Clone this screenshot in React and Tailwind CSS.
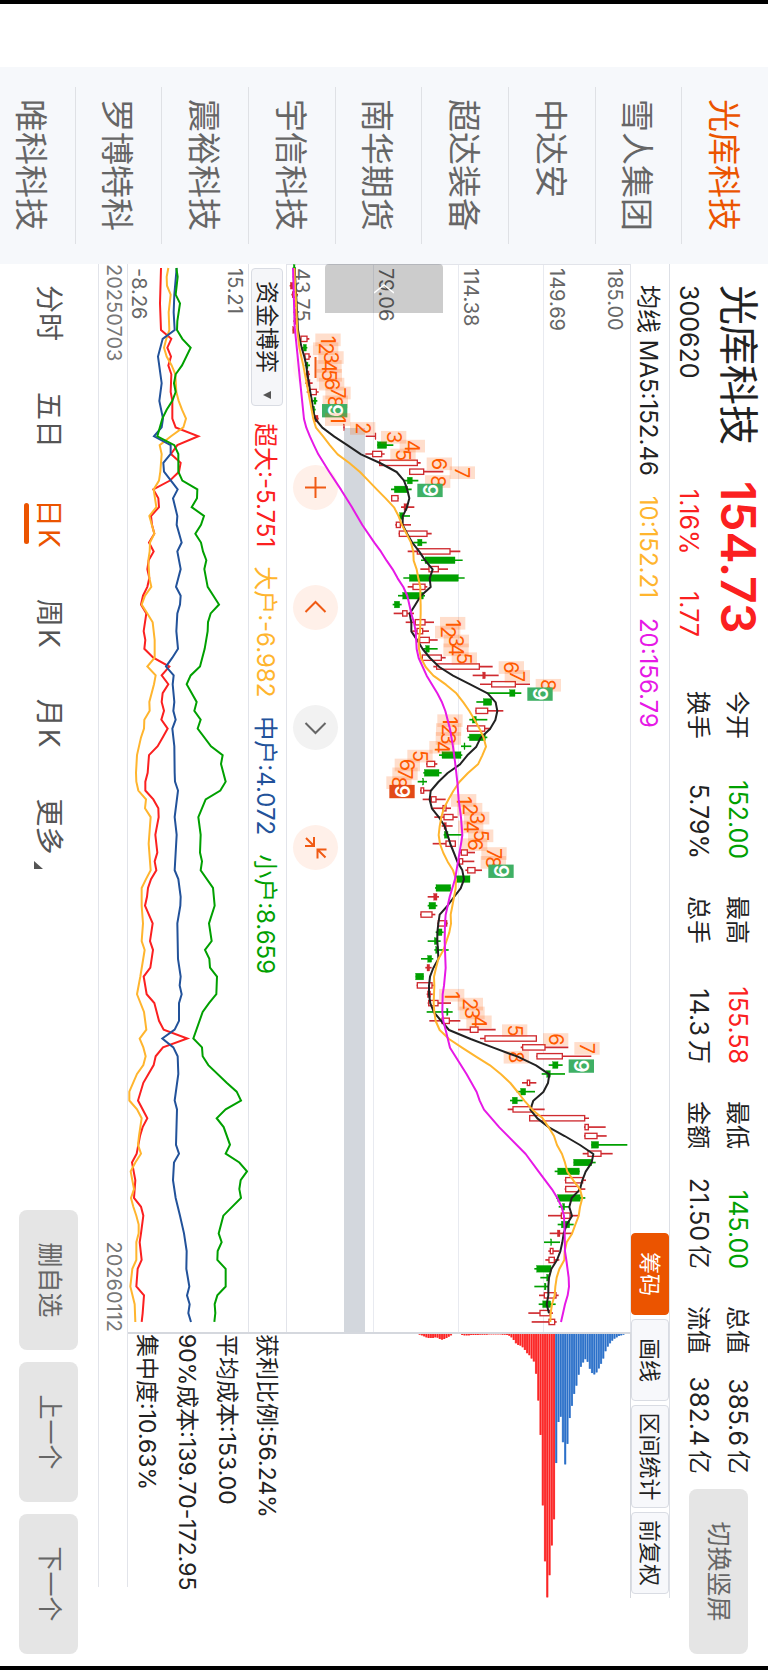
import React from "react";

const WATCHLIST = ["光库科技", "雪人集团", "中达安", "超达装备", "南华期货", "宇信科技", "震裕科技", "罗博特科", "唯科科技"];

const QUOTES = [
  [{ label: "今开", value: "152.00", tone: "text-[#00a000]" }, { label: "换手", value: "5.79%" }],
  [{ label: "最高", value: "155.58", tone: "text-[#fb2020]" }, { label: "总手", value: "14.3", unit: "万" }],
  [{ label: "最低", value: "145.00", tone: "text-[#00a000]" }, { label: "金额", value: "21.50", unit: "亿" }],
  [{ label: "总值", value: "385.6", unit: "亿" }, { label: "流值", value: "382.4", unit: "亿" }],
];

/* Chart units are a third of a pixel; one trading day spans STEP units. */
const FIRST = 12;
const STEP = 26.57;
const dayX = (i) => FIRST + STEP * i;

/* Candles: kind (h hollow rise, s solid rise, g fall), body low, body high, wick low, wick high. */
const CANDLES = [
  {
    base: -21,
    from: 0,
    rows: [
      ["g", 40, 45, 38, 48], ["s", 39, 47, 38, 48], ["s", 31, 39, 29, 42], ["h", 37, 50, 34, 54], ["s", 42, 48, 40, 50],
      ["s", 42, 48, 40, 50], ["s", 42, 49, 40, 50], ["s", 38, 44, 38, 46], ["h", 62, 82, 60, 88], ["g", 70, 79, 66, 82],
      ["h", 74, 88, 72, 93], ["g", 78, 84, 74, 90], ["s", 79, 87, 76, 90], ["s", 80, 90, 76, 98], ["h", 90, 110, 80, 116],
      ["g", 102, 108, 98, 112], ["g", 99, 104, 97, 107], ["s", 104, 114, 100, 116], ["s", 191, 193, 190, 194], ["s", 285, 288, 257, 288],
      ["g", 292, 320, 292, 340], ["h", 277, 306, 256, 314], ["h", 298, 413, 297, 422], ["h", 388, 432, 387, 490], ["g", 382, 397, 370, 415],
      ["g", 343, 383, 333, 395], ["h", 334, 355, 333, 356], ["s", 372, 381, 363, 403], ["g", 359, 370, 357, 390], ["h", 348, 362, 346, 393],
    ],
  },
  {
    base: 279,
    from: 30,
    rows: [
      ["h", 57, 142, 56, 155], ["g", 113, 126, 100, 140], ["h", 111, 211, 83, 241], ["g", 135, 225, 123, 248], ["h", 146, 176, 121, 204],
      ["g", 88, 235, 70, 254], ["h", 98, 136, 83, 142], ["g", 68, 130, 54, 135], ["g", 43, 59, 38, 65], ["h", 67, 82, 41, 102],
      ["h", 105, 136, 77, 162], ["h", 110, 129, 97, 147], ["h", 118, 149, 116, 173], ["g", 137, 148, 130, 173], ["h", 126, 185, 122, 197],
      ["h", 169, 299, 160, 338], ["s", 308, 316, 278, 356], ["h", 334, 407, 300, 450], ["g", 389, 405, 320, 424], ["g", 310, 335, 289, 335],
      ["h", 287, 324, 286, 370], ["g", 277, 289, 268, 322], ["h", 262, 315, 260, 333], ["g", 268, 316, 263, 322], ["g", 252, 255, 243, 274],
      ["g", 186, 243, 177, 247], ["h", 140, 165, 138, 172], ["g", 133, 177, 130, 185], ["g", 128, 131, 113, 141], ["h", 122, 132, 120, 152],
      ["h", 153, 169, 128, 197], ["h", 188, 199, 158, 213], ["h", 191, 220, 163, 233], ["s", 192, 199, 185, 218], ["g", 193, 204, 191, 247],
      ["h", 197, 227, 158, 228], ["h", 243, 263, 240, 285], ["h", 237, 249, 234, 283], ["h", 262, 286, 256, 306], ["g", 228, 270, 228, 270],
      ["g", 168, 212, 165, 213], ["s", 161, 171, 143, 177], ["g", 147, 167, 143, 172], ["h", 122, 157, 120, 166], ["h", 174, 201, 172, 203],
      ["g", 173, 186, 167, 191], ["g", 163, 173, 143, 182], ["g", 167, 175, 163, 206], ["g", 143, 155, 123, 160], ["s", 141, 149, 136, 155],
      ["g", 107, 131, 107, 131], ["h", 111, 157, 110, 164], ["s", 142, 152, 140, 158], ["h", 145, 175, 143, 213], ["g", 200, 204, 140, 218],
      ["h", 185, 209, 148, 241], ["h", 270, 295, 234, 347],
    ],
  },
  {
    base: 339,
    from: 87,
    rows: [
      ["h", 254, 410, 240, 411], ["h", 367, 436, 362, 505], ["h", 410, 488, 409, 574], ["g", 458, 474, 446, 488], ["g", 440, 451, 425, 495],
      ["h", 381, 390, 366, 409], ["g", 362, 377, 350, 405], ["g", 337, 352, 330, 368], ["h", 338, 396, 323, 434], ["h", 388, 555, 387, 567],
      ["h", 554, 566, 552, 617], ["h", 554, 592, 552, 620], ["g", 574, 596, 574, 682], ["h", 563, 604, 548, 638], ["g", 521, 575, 521, 587],
      ["g", 473, 538, 464, 539], ["h", 496, 549, 494, 558], ["h", 496, 537, 494, 556], ["g", 473, 541, 468, 556], ["g", 488, 494, 476, 508],
      ["h", 483, 511, 444, 535], ["g", 484, 509, 473, 521], ["s", 472, 480, 449, 518], ["g", 452, 455, 432, 480], ["h", 450, 460, 445, 478],
      ["h", 446, 464, 436, 478], ["g", 410, 453, 403, 455], ["g", 440, 446, 421, 448], ["g", 433, 438, 403, 446], ["h", 432, 469, 417, 476],
      ["g", 428, 452, 416, 467], ["h", 419, 451, 385, 459], ["h", 446, 465, 395, 470],
    ],
  },
];

/* Moving averages: each segment shifts its [x, level] pairs by dx and dy. */
const AVERAGES = [
  {
    color: "#222222",
    parts: [
      [-42, -21, "54,44 240,54 267,59 293,65 320,73 347,79 373,82 400,87 427,91 453,96 480,99 507,106 533,127 560,163 586,203 613,243 639,300 666,350 692,372 719,382 745,388 772,381 799,368 825,368 852,382"],
      [708, 279, "128,97 155,118 182,136 208,158 235,149 261,152 288,122 314,106 341,89 368,94 394,94 421,112 447,128 474,150 501,178 527,219 554,272 580,323 607,347 633,352 660,346 687,330 713,302 740,289 766,262 793,240 819,203 846,175 873,152"],
      [1488, 279, "119,149 146,156 172,177 199,194 225,203 252,211 279,222 305,232 331,247 358,252 385,242 411,222 438,202 464,179 491,175 517,172 544,172 571,174 597,175 624,160 650,150 677,147 703,147 730,151 757,162 783,184 810,207"],
      [2148, 339, "177,212 203,280 230,353 256,408 283,448 309,444 336,430 362,400 389,391 415,412 442,447 468,494 495,540 522,580 548,575 575,557 601,547 628,540 654,515 681,508 708,516 734,500 761,491 787,487 814,481 840,471 867,454 893,447 920,445 946,445 973,440 1000,447"],
    ],
  },
  {
    color: "#ffb52e",
    parts: [
      [-42, -21, "54,43 240,52 293,58 347,70 400,80 453,90 507,100 533,108 560,130 586,150 613,173 639,208 666,240 692,265 719,291 745,317 772,342 799,356 825,366 852,380 878,393"],
      [708, 279, "155,100 182,101 208,110 235,115 261,121 288,121 314,122 341,122 368,121 394,120 421,116 447,117 474,123 501,137 527,160 554,198 580,229 607,250 633,268 660,284 687,299 713,311 740,318 766,307 793,294 819,264 846,238 873,220 899,205"],
      [1488, 279, "146,191 172,184 199,179 225,176 252,180 279,190 305,203 331,219 358,228 385,227 411,222 438,217 464,212 491,213 517,208 544,199 571,190 597,175 624,168 650,162 677,163 703,162 730,161 757,163 783,167 810,179"],
      [2148, 339, "177,147 203,186 230,228 256,270 283,303 309,331 336,353 362,373 389,397 415,428 442,446 468,462 495,471 522,486 548,495 575,502 601,520 628,540 654,547 681,540 708,536 734,526 761,516 787,500 814,494 840,493 867,478 893,470 920,466 946,464 973,456 1000,452 1026,451"],
    ],
  },
  {
    color: "#e619e6",
    parts: [
      [-42, -21, "54,39 230,44 320,53 400,61 507,72 533,79 560,90 586,102 613,115 666,148 719,183 772,216 825,247 878,283"],
      [708, 279, "155,3 182,20 208,38 235,53 261,70 288,82 314,88 341,94 368,102 394,107 447,110 474,116 527,140 580,172 607,186 633,196 687,210 740,219 793,226 846,232 899,236"],
      [1488, 279, "172,243 225,247 252,243 305,234 358,225 411,209 464,197 491,195 544,194 624,197 677,192 703,188 757,187 783,190 810,197"],
      [2148, 339, "203,150 283,200 336,230 362,239 389,252 442,298 522,377 575,416 628,456 654,472 681,485 708,492 761,494 814,495 840,499 893,506 920,507 946,503 973,495 1000,489 1026,483"],
    ],
  },
];

/* Nine-count sequences: first day, level of every digit, colour of the closing nine. */
const COUNTS = [
  { from: 8, base: -21, levels: [144, 137, 153, 147, 148, 155, 174, 166, 164], end: "#3fb065" },
  { from: 17, base: -21, levels: [173, 248, 341, 397, 369, 478, 547, 473, 450], end: "#3fb065" },
  { from: 40, base: 279, levels: [218, 203, 229, 228, 253, 394, 412, 505, 480], end: "#3fb065" },
  { from: 51, base: 279, levels: [210, 206, 205, 186, 120, 82, 75, 57, 66], end: "#e34a17" },
  { from: 60, base: 279, levels: [251, 269, 290, 272, 302, 284, 342, 340, 363], end: "#3fb065" },
  { from: 82, base: 339, levels: [155, 211, 216, 237, 344, 467, 561, 349, 544], end: "#3fb065" },
];

const FLOWS = [
  {
    color: "#fb2020",
    points: "0,213 4,210 7,213 8,244 9,232 10,243 11,235 12,244 14,242 15,247 17,247 18,257 19,325 20,262 21,243 22,272 23,267 24,240 25,190 26,205 27,207 28,183 29,186 30,193 31,177 32,191 33,176 34,172 35,178 36,172 37,159 38,153 39,169 41,161 42,166 43,163 44,190 45,238 46,215 47,235 48,218 49,215 50,222 51,214 52,233 53,218 54,203 55,177 57,173 58,166 59,166 60,190 61,205 62,206 64,196 66,202 67,194 68,199 69,183 70,174 71,171 72,165 74,188 76,180 77,189 79,181 80,161 82,170 83,193 85,207 86,221 87,292 88,219 89,197 90,191 92,160 94,144 96,172 97,158 98,150 100,140 101,126 103,136 105,132 106,153 107,160 109,153 110,149 112,155 113,143 115,139 116,162 118,158 119,155",
  },
  {
    color: "#ffb52e",
    points: "0,235 1,230 2,231 3,242 5,236 7,238 8,229 9,222 10,230 11,245 12,256 14,259 15,266 16,276 17,288 18,280 19,243 20,209 21,215 23,211 24,207 25,191 26,195 27,199 28,178 30,193 31,180 32,179 33,175 35,178 36,184 37,165 38,155 39,172 40,188 42,194 44,194 45,172 46,197 47,192 49,178 50,179 51,163 52,162 53,153 55,141 57,138 58,139 59,145 60,168 61,165 62,182 65,176 68,182 69,168 70,155 72,155 74,159 76,155 77,164 80,151 82,141 84,162 86,169 87,149 88,160 89,167 90,160 91,141 93,118 94,118 95,141 96,155 98,147 99,144 100,153 101,136 102,122 104,132 105,123 106,130 107,139 108,146 109,146 110,139 112,139 113,127 115,121 117,134 119,136",
  },
  {
    color: "#22529a",
    points: "0,260 3,253 5,251 7,254 8,218 10,204 13,215 15,208 17,219 18,215 19,192 20,242 21,242 22,220 23,222 25,263 26,249 28,262 29,260 31,275 32,262 34,272 36,258 37,272 38,270 39,262 41,259 43,264 44,247 45,228 46,251 47,248 49,253 50,250 51,257 52,247 54,253 57,254 58,255 59,264 62,254 64,260 68,254 69,265 71,272 72,271 74,262 78,264 80,272 81,269 82,275 83,267 85,267 86,254 87,217 88,250 89,263 91,265 94,254 95,261 99,258 100,267 101,252 103,249 105,257 107,270 109,282 111,290 113,289 115,298 116,291 117,299 118,295 119,303",
  },
  {
    color: "#00a000",
    points: "0,259 1,263 3,257 4,270 6,262 7,261 8,277 9,302 11,276 12,257 13,252 14,257 15,247 16,230 17,217 19,202 20,253 21,265 23,265 24,277 25,322 26,321 27,305 28,342 29,333 30,316 31,333 32,339 33,349 34,343 36,353 38,387 39,362 40,354 41,353 43,344 45,330 46,302 47,290 49,320 50,313 51,332 52,323 54,363 55,398 56,393 58,407 59,391 60,347 62,325 64,332 66,330 67,336 68,332 70,369 72,374 74,357 76,365 77,345 78,358 79,360 80,381 82,379 83,357 84,338 87,310 88,336 89,338 90,355 92,410 93,440 94,453 95,407 96,380 97,401 99,420 100,407 101,448 102,471 103,452 104,448 105,453 107,400 109,386 110,395 111,383 112,382 113,407 115,407 116,382 117,374 118,376 119,373",
  },
];

/* Chip distribution, one bar every 6.77 units going up from level 396. */
const CHIPS_LOSS = [
  2, 4, 7, 10, 12, 12, 12, 10, 11, 15, 17, 15, 12, 8, 4, 0, 0, 0, 0, 3, 4, 4, 4, 3, 3, 3, 3, 2, 2, 2, 2, 1, 1, 1, 1, 1, 1, 2, 2,
  3, 5, 10, 18, 28, 33, 35, 40, 48, 58, 64, 74, 83, 120, 201, 305, 518, 687, 796, 729, 639, 560,
];
const CHIPS_GAIN = [
  390, 266, 250, 327, 394, 332, 254, 217, 181, 156, 123, 99, 86, 76, 84, 105, 118, 122, 116, 104, 90, 74, 52, 38, 28, 20, 14, 10, 6, 4, 2,
];

const parse = (text) => text.split(" ").map((pair) => pair.split(",").map(Number));

function PriceChart() {
  const H = 1032;
  const labels = [
    ["185.00", 963],
    ["149.69", 788],
    ["114.38", 532],
    ["79.06", 276],
    ["43.75", 24],
  ];
  return (
    <svg viewBox="0 0 3204 1032" className="pointer-events-none relative block w-full" role="img" aria-label="日K线图">
      <g fontFamily="Inter, sans-serif" fontSize="60" fill="#666">
        {labels.map(([text, level]) => (
          <text key={text} x="12" y={H - level}>{text}</text>
        ))}
      </g>
      {CANDLES.map((group) =>
        group.rows.map(([kind, lo, hi, wickLo, wickHi], n) => {
          const i = group.from + n;
          const x = dayX(i);
          const y = (v) => H - group.base - v;
          const color = kind === "g" ? "#00a000" : "#cf2b30";
          return (
            <g key={i} stroke={color}>
              <line x1={x} x2={x} y1={y(wickHi)} y2={y(wickLo)} strokeWidth="5" />
              {kind === "h" ? (
                <rect x={x - 8} y={y(hi) + 1} width="16" height={Math.max(hi - lo - 2, 2)} fill="#fff" strokeWidth="4" />
              ) : (
                <rect x={x - 10} y={y(hi)} width="20" height={Math.max(hi - lo, 2)} fill={color} strokeWidth="1" />
              )}
            </g>
          );
        }),
      )}
      {COUNTS.map((run) =>
        run.levels.map((level, n) => {
          const x = dayX(run.from + n) + 3;
          const y = H - run.base - level;
          const last = n === 8;
          return (
            <g key={`${run.from}-${n}`}>
              <rect
                x={x - (last ? 20 : 19)}
                y={y - 38}
                width={last ? 40 : 38}
                height="76"
                fill={last ? run.end : "#ff5a00"}
                fillOpacity={last ? 1 : 0.2}
              />
              <text
                x={x}
                y={y + 21}
                textAnchor="middle"
                fontFamily="Inter, sans-serif"
                fontSize="60"
                fontWeight={last ? 600 : 400}
                fill={last ? "#fff" : "#ff5a00"}
              >
                {n + 1}
              </text>
            </g>
          );
        }),
      )}
      {AVERAGES.map(({ color, parts }) => (
        <polyline
          key={color}
          fill="none"
          stroke={color}
          strokeWidth="6"
          strokeLinejoin="round"
          points={parts.flatMap(([dx, dy, text]) => parse(text).map(([x, v]) => `${x + dx},${H - v - dy}`)).join(" ")}
        />
      ))}
    </svg>
  );
}

function FlowChart() {
  return (
    <svg viewBox="0 0 3204 360" className="block w-full" role="img" aria-label="资金博弈走势">
      <g fontFamily="Inter, sans-serif" fontSize="60" fill="#666">
        <text x="12" y="59">15.21</text>
        <text x="12" y="347">-8.26</text>
      </g>
      {FLOWS.map(({ color, points }) => (
        <polyline
          key={color}
          fill="none"
          stroke={color}
          strokeWidth="6"
          points={parse(points).map(([i, v]) => `${dayX(i)},${474 - v}`).join(" ")}
        />
      ))}
    </svg>
  );
}

function ChipChart() {
  const bar = (length, n, dark, light) => {
    const y = 1032 - 396 - 6.77 * n;
    return (
      <g key={n}>
        <rect x="0" y={y - 3.4} width={length} height="6.8" fill={light} />
        <rect x="0" y={y - 2.4} width={length} height="4.4" fill={dark} />
      </g>
    );
  };
  return (
    <svg viewBox="0 0 798 1032" className="block w-full" role="img" aria-label="筹码分布">
      {CHIPS_LOSS.map((length, n) => bar(length, n, "#fb2424", "#fc5c5c"))}
      {CHIPS_GAIN.map((length, n) => bar(length, n + CHIPS_LOSS.length, "#2b70c9", "#6698d8"))}
    </svg>
  );
}

const CONTROLS = [
  { label: "缩小", tone: "bg-[#fff8f5] text-[#f05a14]", path: "M12 22.500H33" },
  { label: "放大", tone: "bg-[#fff0e9] text-[#f05a14]", path: "M12 22.500H33M22.500 12V33" },
  { label: "左移", tone: "bg-[#fff0e9] text-[#f05a14]", path: "M27 12.500L17 22.500L27 32.500" },
  { label: "右移", tone: "bg-[#f2f2f2] text-[#666]", path: "M18 12.500L28 22.500L18 32.500" },
  {
    label: "收起",
    tone: "bg-[#fff0e9] text-[#f05a14]",
    path: "M24.500 11.500V20.500H33.500M24.500 20.500L32.500 12.500M12 24H21V33M21 24L13 32",
  },
];

function Tool({ children, active, wide }) {
  return (
    <button
      type="button"
      className={`h-[38px] rounded border text-[22px] leading-[22px] ${wide ? "w-[103px]" : "w-[82px]"} ${
        active ? "border-[#eb5400] bg-[#eb5400] text-white" : "border-[#d9dce3] bg-[#f7f8fb] text-[#222]"
      }`}
    >
      {children}
    </button>
  );
}

function GreyButton({ children, wide }) {
  return (
    <button
      type="button"
      className={`h-[59px] rounded-lg bg-[#e5e5e5] text-[25px] text-[#666] ${wide ? "w-[165px]" : "w-[140px]"}`}
    >
      {children}
    </button>
  );
}

export default function App() {
  return (
    <div className="h-screen overflow-hidden bg-white">
      <div className="flex h-[100vw] w-[100vh] origin-top-left translate-x-[100vw] rotate-90 border-x-4 border-black bg-white font-['Inter','Noto_Sans_CJK_SC',sans-serif] text-[#222]">
        <nav aria-label="自选股" className="ml-[63px] w-[197px] shrink-0 overflow-hidden bg-[#f6f8fb]">
          <ul className="mx-5 grid h-[780px] grid-rows-9">
            {WATCHLIST.map((name, i) => (
              <li key={name} className="border-b border-[#dfe1e5]">
                <a
                  href={`#${name}`}
                  className={`flex h-full items-center pt-1 pl-3 text-[33px] whitespace-nowrap ${i === 0 ? "text-[#eb5400]" : "text-[#666]"}`}
                >
                  {name}
                </a>
              </li>
            ))}
          </ul>
        </nav>

        <main className="flex min-w-0 flex-1 flex-col">
          <header className="flex h-[98px] shrink-0 pr-3 pl-[21px] whitespace-nowrap">
            <div className="w-[196px]">
              <h1 className="text-[40px] leading-[60px]">光库科技</h1>
              <p className="text-[25px] leading-[38px]">300620</p>
            </div>
            <div className="w-[156px] text-[#fb2020]">
              <p className="text-[48px] leading-[60px] font-semibold">154.73</p>
              <p className="flex justify-between pl-2 text-[25px] leading-[38px]">
                <span>1.16%</span>
                <span>1.77</span>
              </p>
            </div>
            <div className="ml-[54px] grid grid-cols-4 gap-x-[37px] pt-[11px] text-2xl">
              {QUOTES.map((pair) => (
                <dl key={pair[0].label} className="w-[168px]">
                  {pair.map(({ label, value, unit, tone }) => (
                    <div key={label} className="flex h-[39px] items-center justify-between">
                      <dt>{label}</dt>
                      <dd className={`flex items-center gap-1 text-[25px] ${tone || ""}`}>
                        <span>{value}</span>
                        {unit && <span className="text-2xl">{unit}</span>}
                      </dd>
                    </div>
                  ))}
                </dl>
              ))}
            </div>
            <div className="ml-auto pt-5">
              <GreyButton wide>切换竖屏</GreyButton>
            </div>
          </header>

          <div className="mr-[68px]">
            <div className="flex h-[39px] items-center border-t border-[#dde0e6] pr-1 pl-[21px] text-2xl whitespace-nowrap">
              <div className="flex gap-5 pt-1">
                <span>均线 MA5:152.46</span>
                <span className="text-[#ffb52e]">10:152.21</span>
                <span className="text-[#e619e6]">20:156.79</span>
              </div>
              <div className="ml-auto flex gap-1">
                <Tool active>筹码</Tool>
                <Tool>画线</Tool>
                <Tool wide>区间统计</Tool>
                <Tool>前复权</Tool>
              </div>
            </div>

            <div className="flex">
              <section className="min-w-0 flex-1">
                <div className="relative">
                  <div className="absolute inset-0 flex flex-col border-t border-l border-[#e2e4ea]">
                    <div className="h-[87px] border-b border-[#e8eaf0]" />
                    <div className="h-[85px] border-b border-[#e8eaf0]" />
                    <div className="h-[85px] border-b border-[#e8eaf0]" />
                    <div className="mt-2 ml-[163px] h-[21px] bg-[#d3d7dd]" />
                  </div>
                  <div className="absolute bottom-[6px] left-[81px] flex gap-[75px]">
                    {CONTROLS.map(({ label, tone, path }) => (
                      <button key={label} type="button" aria-label={label} className={`size-[45px] rounded-full ${tone}`}>
                        <svg viewBox="0 0 45 45" className="size-full" fill="none" stroke="currentColor" strokeWidth="2">
                          <path d={path} />
                        </svg>
                      </button>
                    ))}
                  </div>
                  <PriceChart />
                  <button
                    type="button"
                    aria-label="展开侧栏"
                    className="absolute top-[188px] left-0 flex h-[118px] w-[49px] items-center justify-center rounded-l bg-black/20 text-white"
                  >
                    <svg viewBox="0 0 10 20" className="h-5 w-[10px]" fill="none" stroke="currentColor" strokeWidth="1.500">
                      <path d="M9 0L1 10L9 20" />
                    </svg>
                  </button>
                </div>

                <div className="flex h-[39px] items-center gap-[19px] border-y border-[#e2e4ea] pl-1 text-2xl whitespace-nowrap">
                  <div className="relative -mr-0.5">
                    <select
                      aria-label="副图指标"
                      className="block h-8 w-[138px] appearance-none rounded border border-[#d9dce3] bg-[#f5f6f9] pl-3 text-[23px] leading-[30px] text-[#222]"
                    >
                      <option>资金博弈</option>
                    </select>
                    <svg viewBox="0 0 8 8" className="pointer-events-none absolute top-3 right-[7px] size-2" fill="#555">
                      <path d="M0 0H8L4 8Z" />
                    </svg>
                  </div>
                  <div className="flex gap-[19px] pt-1">
                    <span className="text-[#fb2020]">超大:-5.751</span>
                    <span className="text-[#ffb52e]">大户:-6.982</span>
                    <span className="text-[#22529a]">中户:4.072</span>
                    <span className="text-[#00a000]">小户:8.659</span>
                  </div>
                </div>
                <FlowChart />
              </section>

              <section className="w-[266px] shrink-0 border-t border-l-2 border-[#d5d8de] whitespace-nowrap">
                <ChipChart />
                <ul className="pt-0.5 text-[23px] leading-10">
                  <li>获利比例:56.24%</li>
                  <li>平均成本:153.00</li>
                  <li>90%成本:139.70-172.95</li>
                  <li className="-mb-0.5">集中度:10.63%</li>
                </ul>
              </section>
            </div>
          </div>

          <div className="mr-[79px] h-[30px] shrink-0 border-y border-[#e2e4ea]">
            <div className="flex w-[1068px] justify-between text-[20px] leading-[27px] text-[#777]">
              <span>20250703</span>
              <span>20260112</span>
            </div>
          </div>

          <footer className="flex flex-1 items-center justify-between pr-3 pl-[21px]">
            <nav aria-label="周期" className="flex gap-[51px] text-[28px] whitespace-nowrap text-[#555]">
              <a href="#minute">分时</a>
              <a href="#five">五日</a>
              <a href="#day" aria-current="page" className="relative flex gap-0.5 text-[#eb5400]">
                <span>日</span>
                <span>K</span>
                <span className="absolute right-1 -bottom-1 left-1 h-[5px] rounded-full bg-[#eb5400]" />
              </a>
              <a href="#week" className="flex gap-0.5">
                <span>周</span>
                <span>K</span>
              </a>
              <a href="#month" className="flex gap-0.5">
                <span>月</span>
                <span>K</span>
              </a>
              <a href="#more" className="flex items-center gap-1.5">
                更多
                <svg viewBox="0 0 8 9" className="mt-5 h-[9px] w-2" fill="#555">
                  <path d="M8 0V9H0Z" />
                </svg>
              </a>
            </nav>
            <div className="flex gap-3">
              <GreyButton>删自选</GreyButton>
              <GreyButton>上一个</GreyButton>
              <GreyButton>下一个</GreyButton>
            </div>
          </footer>
        </main>
      </div>
    </div>
  );
}
